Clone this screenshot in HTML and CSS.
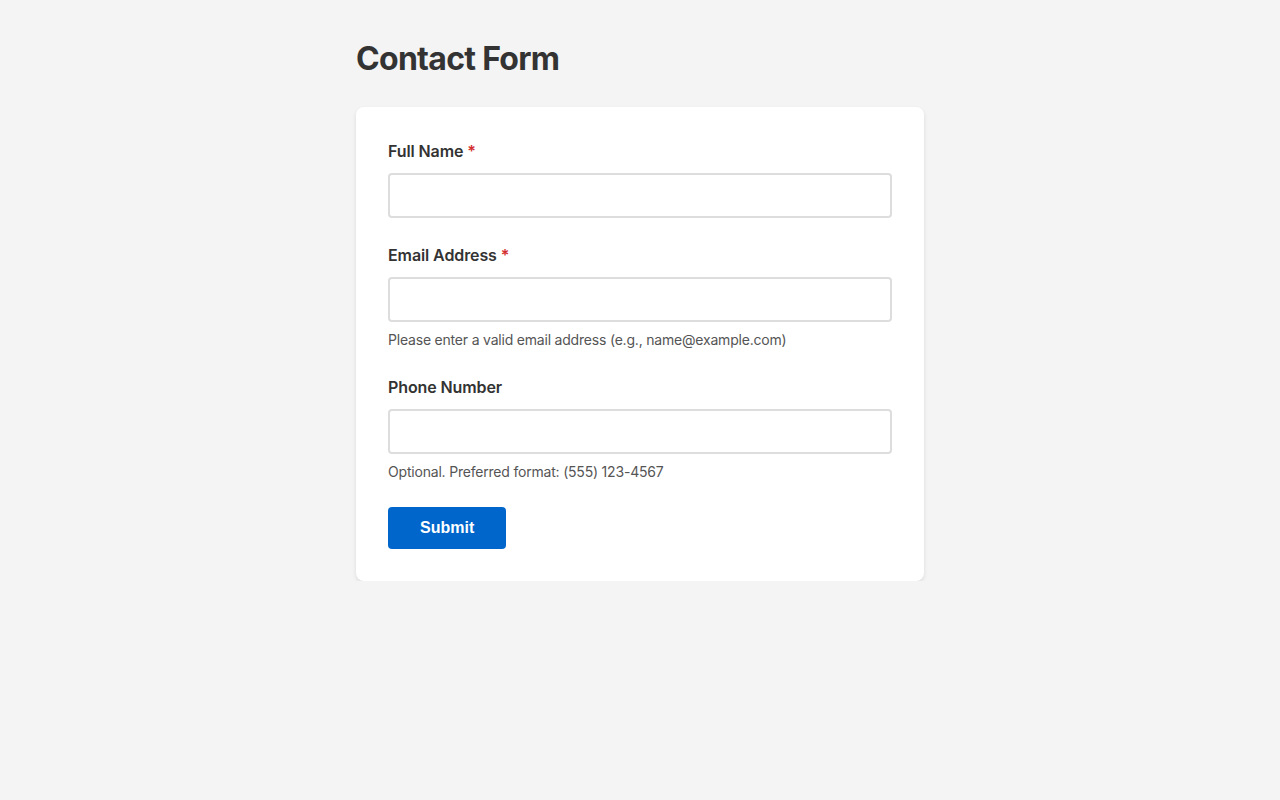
FILE: index.html
```html
<!DOCTYPE html>
<html lang="en">
<head>
<meta charset="utf-8">
<title>Contact Form</title>
<link rel="stylesheet" href="styles.css">
</head>
<body>
<main class="page">
  <h1 class="title">Contact Form</h1>
  <form class="card">
    <div class="field">
      <label class="label" for="name">Full Name <span class="req">*</span></label>
      <input class="input" id="name" type="text">
    </div>
    <div class="field">
      <label class="label" for="email">Email Address <span class="req">*</span></label>
      <input class="input" id="email" type="email">
      <p class="hint">Please enter a valid email address (e.g., name@example.com)</p>
    </div>
    <div class="field">
      <label class="label" for="phone">Phone Number</label>
      <input class="input" id="phone" type="tel">
      <p class="hint">Optional. Preferred format: (555) 123-4567</p>
    </div>
    <button class="submit" type="button">Submit</button>
  </form>
</main>
</body>
</html>
```
FILE: styles.css
```css
html, body {
  margin: 0;
  padding: 0;
}
body {
  background: #f4f4f4;
  font-family: Inter, "Noto Sans", sans-serif;
  color: #333;
}
.page {
  width: 568px;
  margin: 0 auto;
  padding-top: 40px;
}
.title {
  margin: 0 0 29px;
  font-size: 32px;
  line-height: 38px;
  font-weight: 700;
  letter-spacing: -0.7px;
  color: #333;
}
.card {
  background: #fff;
  border-radius: 8px;
  box-shadow: 0 2px 4px rgba(0, 0, 0, 0.1);
  padding: 32px;
  display: flex;
  flex-direction: column;
  align-items: flex-start;
}
.field {
  width: 100%;
  margin-bottom: 25px;
}
.label {
  display: block;
  font-size: 16px;
  line-height: 24px;
  font-weight: 600;
  letter-spacing: -0.1px;
  color: #333;
  margin-bottom: 10px;
}
.req {
  color: #d32f2f;
}
.input {
  display: block;
  box-sizing: border-box;
  width: 100%;
  height: 45px;
  margin: 0;
  padding: 10px 12px;
  border: 2px solid #ddd;
  border-radius: 4px;
  font-family: Inter, "Noto Sans", sans-serif;
  font-size: 16px;
  background: #fff;
}
.hint {
  margin: 8px 0 0;
  font-size: 14px;
  line-height: 20px;
  letter-spacing: -0.2px;
  color: #555;
}
.submit {
  font-family: "Liberation Sans", Arial, sans-serif;
  font-size: 16px;
  font-weight: 700;
  color: #fff;
  background: #0066cc;
  border: none;
  border-radius: 4px;
  padding: 12px 32px;
  line-height: 18px;
  cursor: pointer;
}
```
